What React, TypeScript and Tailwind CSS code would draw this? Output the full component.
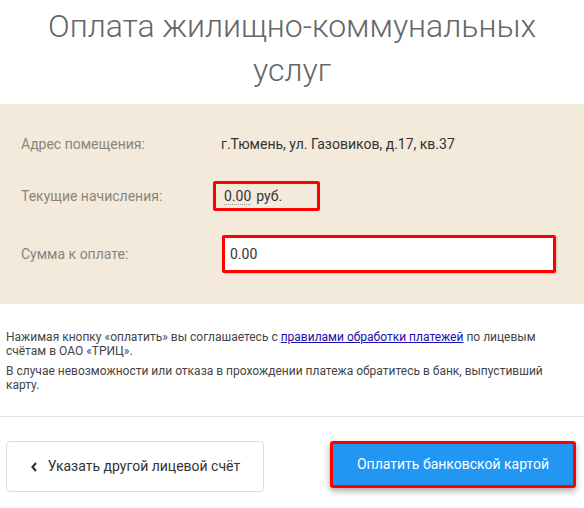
export default function App() {
  return (
    <div className="h-[508px] w-[584px] overflow-hidden bg-white" style={{ fontFamily: "Roboto, 'Liberation Sans', sans-serif" }}>
      <h1 className="px-10 pt-[4px] text-center text-[32px] font-light leading-[44px] text-[#666]">
        Оплата жилищно-коммунальных услуг
      </h1>

      <div className="mt-[12px] h-[200px] bg-[#f3eadb] pl-[21px] pt-[30px] text-[14px]">
        <div className="flex h-[20px] items-center">
          <div className="w-[200px] text-[#8a857c]">Адрес помещения:</div>
          <div className="text-[#333]">г.Тюмень, ул. Газовиков, д.17, кв.37</div>
        </div>

        <div className="mt-[27px] flex items-center">
          <div className="w-[192px] text-[#8a857c]">Текущие начисления:</div>
          <div className="flex h-[30px] w-[107px] items-center rounded-[2px] border-[3px] border-[#ff0000] pl-[8px] text-[#333]">
            <span className="border-b border-dotted border-[#999] leading-[16px]">0.00</span>
            <span className="ml-[5px]">руб.</span>
          </div>
        </div>

        <div className="mt-[24px] flex items-center">
          <div className="w-[201px] text-[#8a857c]">Сумма к оплате:</div>
          <div className="flex h-[38px] w-[334px] items-center rounded-[2px] border-[3px] border-[#ff0000] bg-white pl-[5px] text-[#333] shadow-[1px_1px_2px_rgba(0,0,0,0.15)]">
            0.00
          </div>
        </div>
      </div>

      <div className="px-[6px] pt-[26px] text-[12px] leading-[14px] text-[#444]">
        <p>
          Нажимая кнопку «оплатить» вы соглашаетесь с{" "}
          <a href="#" className="text-[#1a0dab] underline">правилами обработки платежей</a> по лицевым счётам в ОАО «ТРИЦ».
        </p>
        <p className="mt-[6px]">В случае невозможности или отказа в прохождении платежа обратитесь в банк, выпустивший карту.</p>
      </div>

      <div className="mt-[24px] border-t border-[#e3e3e3]" />

      <div className="flex items-start justify-between pl-[6px] pr-[8px] pt-[24px]">
        <button className="flex h-[51px] w-[258px] items-center justify-center gap-[10px] rounded-[4px] border border-[#ddd] bg-white text-[14px] text-[#333]">
          <svg width="8" height="10" viewBox="0 0 8 10">
            <path d="M6 1 L2.5 5 L6 9" fill="none" stroke="#333" strokeWidth="2.2" />
          </svg>
          Указать другой лицевой счёт
        </button>
        <button className="flex h-[47px] w-[246px] items-center justify-center rounded-[3px] border-[3px] border-[#ff0000] bg-[#2196f3] text-[14px] text-white shadow-[0_3px_6px_rgba(0,0,0,0.35)]">
          Оплатить банковской картой
        </button>
      </div>
    </div>
  );
}
